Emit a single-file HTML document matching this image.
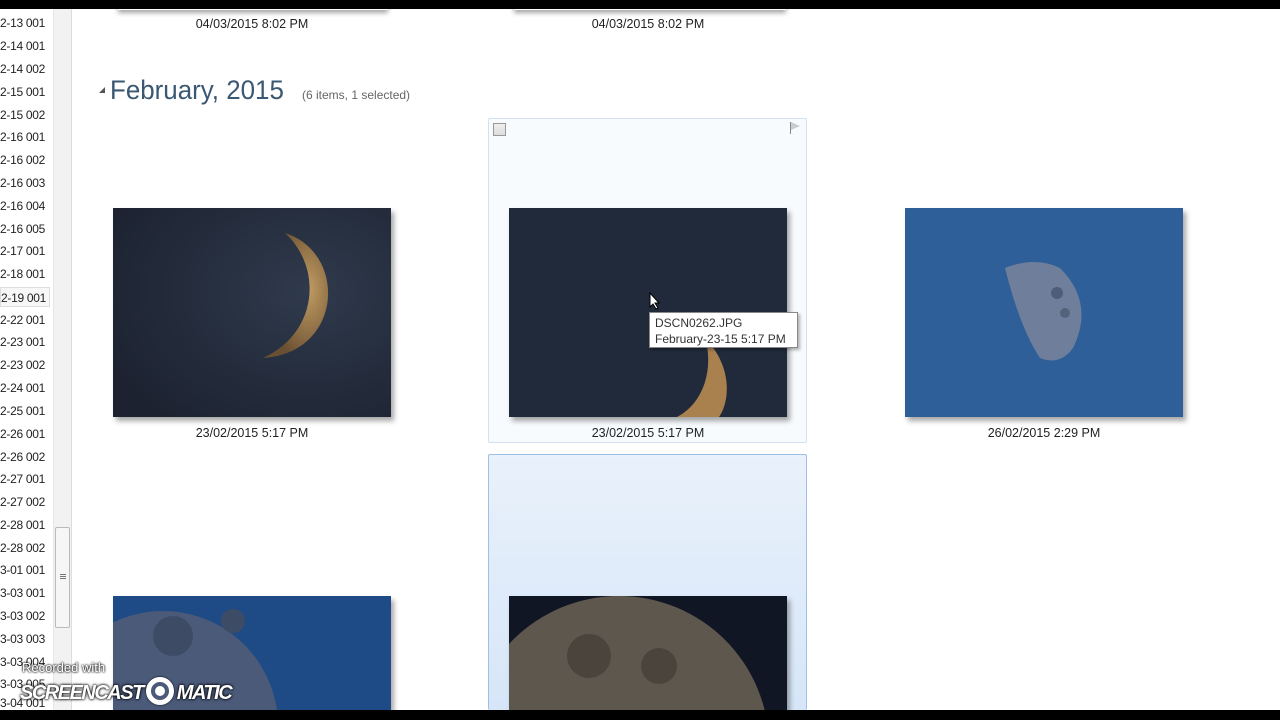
<!DOCTYPE html>
<html><head><meta charset="utf-8"><style>
*{margin:0;padding:0;box-sizing:border-box}
html,body{width:1280px;height:720px;overflow:hidden}
body{background:#fff;position:relative;font-family:"Liberation Sans",sans-serif;}
.bar{position:absolute;left:0;width:1280px;background:#000;z-index:20}
.list{position:absolute;left:0;top:0;width:52px;height:720px;font-size:12px;color:#222;letter-spacing:-0.3px;overflow:hidden}
.list div{position:absolute;left:0;white-space:nowrap}
.scroll{position:absolute;left:53px;top:0;width:19px;height:720px;background:#f2f2f2;border-left:1px solid #e6e6e6;border-right:1px solid #ddd}
.thumb{position:absolute;left:55px;top:527px;width:15px;height:101px;background:#f6f6f6;border:1px solid #b9b9b9;border-radius:2px}
.cap{position:absolute;font-size:12.5px;color:#222;width:278px;text-align:center}
.ph{position:absolute;width:278px;height:209px;box-shadow:3px 4px 5px rgba(0,0,0,.35)}
</style></head><body>
<div class="bar" style="top:0;height:9px"></div>
<div class="bar" style="top:710px;height:10px"></div>
<div class="list">
<div style="top:16px">2-13 001</div><div style="top:39px">2-14 001</div><div style="top:62px">2-14 002</div><div style="top:85px">2-15 001</div><div style="top:108px">2-15 002</div><div style="top:130px">2-16 001</div><div style="top:153px">2-16 002</div><div style="top:176px">2-16 003</div><div style="top:199px">2-16 004</div><div style="top:222px">2-16 005</div><div style="top:244px">2-17 001</div><div style="top:267px">2-18 001</div>
<div style="top:287px;height:20px;width:50px;border:1px solid #ddd;background:#f7f7f7;padding-top:3px">2-19 001</div>
<div style="top:313px">2-22 001</div><div style="top:335px">2-23 001</div><div style="top:358px">2-23 002</div><div style="top:381px">2-24 001</div><div style="top:404px">2-25 001</div><div style="top:427px">2-26 001</div><div style="top:450px">2-26 002</div><div style="top:472px">2-27 001</div><div style="top:495px">2-27 002</div><div style="top:518px">2-28 001</div><div style="top:541px">2-28 002</div><div style="top:563px">3-01 001</div><div style="top:586px">3-03 001</div><div style="top:609px">3-03 002</div><div style="top:632px">3-03 003</div><div style="top:655px">3-03 004</div><div style="top:677px">3-03 005</div><div style="top:696px">3-04 001</div>
</div>
<div class="scroll"></div>
<div class="thumb"><div style="position:absolute;left:4px;top:46px;width:6px;border-top:1px solid #777;height:5px;border-bottom:1px solid #777"></div><div style="position:absolute;left:4px;top:48px;width:6px;border-top:1px solid #777"></div></div>

<div style="position:absolute;left:118px;top:0;width:270px;height:10px;box-shadow:0 3px 5px rgba(0,0,0,.35)"></div>
<div style="position:absolute;left:514px;top:0;width:272px;height:10px;box-shadow:0 3px 5px rgba(0,0,0,.35)"></div>
<div class="cap" style="left:113px;top:17px">04/03/2015 8:02 PM</div>
<div class="cap" style="left:509px;top:17px">04/03/2015 8:02 PM</div>

<div style="position:absolute;left:99px;top:87px;width:0;height:0;border-left:6px solid transparent;border-bottom:6px solid #555"></div>
<div style="position:absolute;left:110px;top:75px;font-size:27px;color:#3a5873;transform:scaleX(.96);transform-origin:left;white-space:nowrap">February, 2015</div>
<div style="position:absolute;left:302px;top:88px;font-size:12px;color:#666">(6 items, 1 selected)</div>

<div style="position:absolute;left:488px;top:118px;width:319px;height:325px;border:1px solid #d5e1ee;background:#f8fbfe;border-radius:2px"></div>
<div style="position:absolute;left:493px;top:123px;width:13px;height:13px;border:1px solid #999;background:linear-gradient(#eee,#ddd)"></div>
<div style="position:absolute;left:790px;top:122px;width:1px;height:12px;background:#888"></div>
<div style="position:absolute;left:791px;top:122px;width:0;height:0;border-top:4px solid transparent;border-bottom:4px solid transparent;border-left:9px solid #ccc"></div>
<div style="position:absolute;left:488px;top:454px;width:319px;height:256px;border:1px solid #9fc0e4;border-bottom:none;background:linear-gradient(#e9f1fb,#d6e6f8);border-radius:2px"></div>

<svg class="ph" style="left:113px;top:208px" viewBox="0 0 278 209"><defs><radialGradient id="g1" cx=".7" cy=".4" r=".8"><stop offset="0" stop-color="#2f3a4c"/><stop offset="1" stop-color="#1c2230"/></radialGradient><radialGradient id="m1" cx=".7" cy=".45" r=".6"><stop offset="0" stop-color="#c19b62"/><stop offset="1" stop-color="#6a5032"/></radialGradient></defs><rect width="278" height="209" fill="url(#g1)"/><path d="M172 25 C235 45 230 145 150 150 C205 125 210 60 172 25Z" fill="url(#m1)"/></svg>

<svg class="ph" style="left:509px;top:208px" viewBox="0 0 278 209"><rect width="278" height="209" fill="#212a3a"/><path d="M196 130 C225 160 220 195 210 209 L168 209 C195 195 205 160 196 130Z" fill="#a8814e"/></svg>
<div style="position:absolute;left:649px;top:312px;width:149px;height:36px;background:#fff;border:1px solid #888;box-shadow:2px 2px 3px rgba(0,0,0,.3);font-size:12px;color:#333;padding:2px 5px;line-height:16px">DSCN0262.JPG<br>February-23-15 5:17 PM</div>
<svg style="position:absolute;left:649px;top:292px" width="12" height="18" viewBox="0 0 12 18"><path d="M1 1 L1 15 L4 12 L7 17 L9 16 L6 11 L10 11 Z" fill="#fff" stroke="#000"/></svg>

<svg class="ph" style="left:905px;top:208px" viewBox="0 0 278 209"><rect width="278" height="209" fill="#2f5f98"/><path d="M100 60 Q130 48 155 60 Q190 95 168 140 Q155 158 135 150 Q115 120 100 60Z" fill="#6f7f9b"/><circle cx="152" cy="85" r="6" fill="#4f5d78"/><circle cx="160" cy="105" r="5" fill="#55627c"/></svg>
<div class="cap" style="left:113px;top:426px">23/02/2015 5:17 PM</div>
<div class="cap" style="left:509px;top:426px">23/02/2015 5:17 PM</div>
<div class="cap" style="left:905px;top:426px">26/02/2015 2:29 PM</div>

<svg class="ph" style="left:113px;top:596px;height:114px" viewBox="0 0 278 114"><rect width="278" height="114" fill="#1e4b86"/><circle cx="50" cy="130" r="115" fill="#4a5a78"/><circle cx="60" cy="40" r="20" fill="#3e4b64"/><circle cx="120" cy="25" r="12" fill="#3e4b64"/></svg>
<svg class="ph" style="left:509px;top:596px;height:114px" viewBox="0 0 278 114"><rect width="278" height="114" fill="#111624"/><circle cx="110" cy="150" r="150" fill="#5e574e"/><circle cx="80" cy="60" r="22" fill="#4a443c"/><circle cx="150" cy="70" r="18" fill="#4a443c"/></svg>

<div style="position:absolute;left:22px;top:660px;font-size:13px;color:#fff;text-shadow:0 0 2px #000,0 0 2px #000;z-index:30">Recorded with</div>
<div style="position:absolute;left:20px;top:677px;height:30px;font-size:20px;font-weight:bold;font-style:italic;color:#fff;text-shadow:0 0 3px #000,0 0 2px #000;z-index:30;letter-spacing:-1.5px;white-space:nowrap">SCREENCAST<span style="display:inline-block;width:28px;height:28px;border:5px solid #fff;border-radius:50%;vertical-align:-6px;margin:0 3px;position:relative;box-shadow:0 0 2px #000"><span style="position:absolute;left:4px;top:4px;width:10px;height:10px;background:#fff;border-radius:50%"></span></span>MATIC</div>
</body></html>
